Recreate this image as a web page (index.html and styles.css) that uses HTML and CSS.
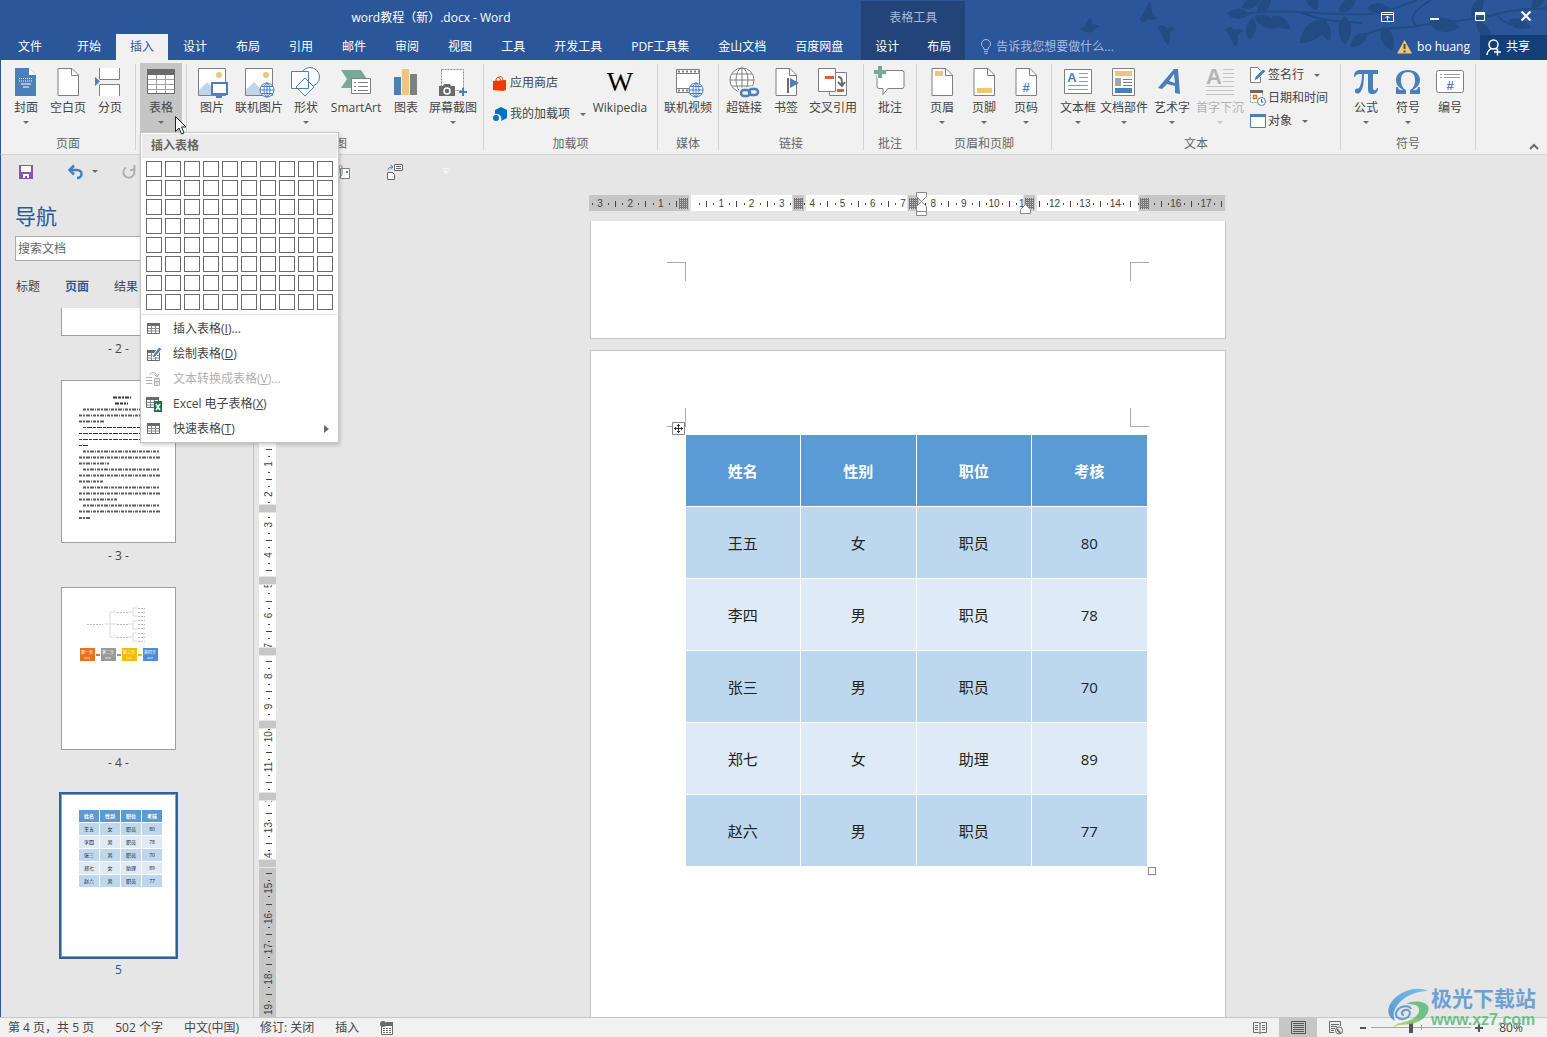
FILE: index.html
```html
<!DOCTYPE html>
<html lang="zh-CN">
<head>
<meta charset="utf-8">
<title>word教程（新）.docx - Word</title>
<link rel="stylesheet" href="styles.css">
</head>
<body>
<svg class="defs" width="0" height="0" aria-hidden="true">
  <defs>
    <g id="page"><path d="M6 2.500h14l6.500 6.500v20.500h-20.500z" fill="#fff" stroke="#7f7f7f"/><path d="M19.500 2.500v7h7" fill="none" stroke="#7f7f7f"/></g>
    <g id="globe" fill="none" stroke="#4a7fb8"><circle r="7" fill="#fff"/><ellipse rx="3" ry="7"/><path d="M-7 0h14M0-7v14M-6-3.500h12M-6 3.500h12"/></g>
    <g id="photo"><path d="M2.500 2.500h27v27h-27z" fill="#fff" stroke="#7f7f7f"/><circle cx="23" cy="9" r="3" fill="#edc67a"/><path d="M3 24l8-8 8 8v5H3z" fill="#c3d4e8"/></g>
    <g id="tiny-table"><path d="M.5 1.500h12v10h-12z" fill="#fff" stroke="#6a6a6a"/><path d="M0 1h13v3H0z" fill="#6a6a6a"/><path d="M1 6.500h11M1 9h11M4.500 4v7M8.500 4v7" stroke="#8a8a8a"/></g>
    <path id="leaf" d="M0 0C4-7 13-9 22-4C16 4 7 6 0 0z"/>
    <path id="bird" d="M0 9c3 0 5-1 6-4C7 2 9 0 12-1c-1 3 0 5 0 7 3-1 6 0 8 2-3 0-5 1-6 3-2 3-5 3-8 2C4 12 2 11 0 9z"/>
    <path id="bird-dive" d="M0 5c2-3 5-4 7-2l3 2c3-1 6-1 9 1-3 1-5 2-6 4 0 4 0 8-2 12-3-3-5-6-6-10C4 9 2 7 0 5z"/>
  </defs>
</svg>

<header class="titlebar">
  <svg class="foliage" width="470" height="60" viewBox="0 0 470 60" fill="#224a83" aria-hidden="true">
    <use href="#bird" transform="translate(3 19) scale(1)"/><use href="#bird-dive" transform="translate(62 24) scale(1 -1)"/><use href="#bird-dive" x="80" y="23"/><use href="#bird-dive" x="148" y="25"/>
    <g fill="none" stroke="#224a83" stroke-width="2"><path d="M160 16C190 8 225 13 260 14S300 16 340 0M225 13c20 8 34 8 60 10M282 40c18-16 40-10 58-14s50-4 80-12 30-3 50-6M340 26c-10-8-2-16 14-26M420 14c4 8 10 10 18 10"/></g>
    <use href="#leaf" transform="translate(172 14) rotate(190)"/><use href="#leaf" transform="translate(180 13) rotate(-40)"/><use href="#leaf" transform="translate(178 16) rotate(35) scale(1.2)"/><use href="#leaf" transform="translate(176 18) rotate(110)"/><use href="#leaf" transform="translate(195 16) rotate(45)"/><use href="#leaf" transform="translate(165 8) rotate(-20)"/>
    <use href="#leaf" transform="translate(250 20) rotate(150) scale(1.600)"/><use href="#leaf" transform="translate(245 20) rotate(80)"/><use href="#leaf" transform="translate(268 16) rotate(100) scale(1.300)"/><use href="#leaf" transform="translate(262 12) rotate(-30)"/><use href="#leaf" transform="translate(290 8) rotate(10)"/><use href="#leaf" transform="translate(290 33) rotate(150)"/><use href="#leaf" transform="translate(306 26) rotate(80) scale(1.200)"/><use href="#leaf" transform="translate(240 10) rotate(-110)"/>
    <use href="#leaf" transform="translate(352 22) rotate(20) scale(1.400)"/><use href="#leaf" transform="translate(395 16) rotate(-50)"/><use href="#leaf" transform="translate(400 22) rotate(60)"/><use href="#leaf" transform="translate(432 20) rotate(30)"/><use href="#leaf" transform="translate(455 8) rotate(-40)"/>
  </svg>
  <div class="titlebar__row">
    <h1 class="titlebar__name">word教程（新）.docx - Word</h1>
    <div class="window-controls">
      <button class="window-btn" aria-label="功能区显示选项"><svg width="14" height="14"><path d="M.5 2.500h12v9H.5zM.5 4.500h12" fill="none" stroke="#fff"/><path d="M6.500 10.500V6M4.500 8l2-2 2 2" fill="none" stroke="#fff"/></svg></button>
      <button class="window-btn" aria-label="最小化"><svg width="14" height="14"><path d="M3 8h9v2H3z" fill="#fff"/></svg></button>
      <button class="window-btn" aria-label="最大化"><svg width="14" height="14"><path d="M2.500 2.500h9v8h-9z" fill="none" stroke="#fff"/><path d="M2 2h10v3H2z" fill="#fff"/></svg></button>
      <button class="window-btn" aria-label="关闭"><svg width="14" height="14"><path d="M2.500 1.500l9 9M11.500 1.500l-9 9" stroke="#fff" stroke-width="2"/></svg></button>
    </div>
  </div>
  <nav class="tabs">
    <button class="tab tab--file">文件</button>
    <button class="tab">开始</button>
    <button class="tab tab--active">插入</button>
    <button class="tab">设计</button>
    <button class="tab">布局</button>
    <button class="tab">引用</button>
    <button class="tab">邮件</button>
    <button class="tab">审阅</button>
    <button class="tab">视图</button>
    <button class="tab">工具</button>
    <button class="tab">开发工具</button>
    <button class="tab">PDF工具集</button>
    <button class="tab">金山文档</button>
    <button class="tab">百度网盘</button>
    <div class="context-tabs">
      <span class="context-tabs__title">表格工具</span>
      <div class="context-tabs__row">
        <button class="tab">设计</button>
        <button class="tab">布局</button>
      </div>
    </div>
    <label class="tell-me"><svg width="12" height="16" fill="none" stroke="#a9bcdb"><path d="M4 10.500C4 8 1.500 7.500 1.500 5a4.500 4.500 0 0 1 9 0C10.500 7.500 8 8 8 10.500zM4 12.500h4M4.500 14.500h3"/></svg><input class="tell-me__input" aria-label="告诉我" placeholder="告诉我您想要做什么..."></label>
    <div class="account">
      <svg width="15" height="14"><path d="M7.500 0L15 13.500H0z" fill="#edc67a"/><path d="M6.500 4h2v5h-2zM6.500 10.500h2v2h-2z" fill="#5b4a2a"/></svg>
      <span class="account__name">bo huang</span>
      <button class="share"><svg width="16" height="16" fill="none" stroke="#fff" stroke-width="1.500"><circle cx="7.500" cy="5.500" r="4.500"/><path d="M1 16c0-3 2-5 4-6.500M9.500 9.500l1.500 1M8 13h7M11.500 9.500v7"/></svg>共享</button>
    </div>
  </nav>
</header>

<section class="ribbon">
  <div class="group">
    <div class="group__items">
      <button class="cmd"><svg width="32" height="32"><path d="M5 2h14l7 7v21H5z" fill="#4a7fb8"/><path d="M19 2l7 7h-7z" fill="#fff"/><path d="M9 12.500h14M9 15h14" stroke="#fff" stroke-dasharray="1 1"/><path d="M11 18h10M13 21h6" stroke="#fff"/></svg>封面<i class="arrow"></i></button>
      <button class="cmd"><svg width="32" height="32"><use href="#page"/></svg>空白页</button>
      <button class="cmd"><svg width="32" height="32"><path d="M5.500 2v11.500h20V2M5.500 30V18.500h20V30" fill="#fff" stroke="#7f7f7f"/><path d="M1 11l5 4.500L1 20z" fill="#4a7fb8"/></svg>分页</button>
    </div>
    <span class="group__label">页面</span>
  </div>

  <div class="group">
    <div class="group__items">
      <button class="cmd cmd--open" aria-expanded="true"><svg width="32" height="32"><path d="M2.500 3.500h27v24h-27z" fill="#fff" stroke="#6a6a6a"/><path d="M2 3h28v6H2z" fill="#6a6a6a"/><path d="M3 13.500h26M3 18.500h26M3 23.500h26M11.500 9v18M20.500 9v18" stroke="#a0a0a0"/></svg>表格<i class="arrow"></i></button>
    </div>
    <svg class="cursor" width="14" height="21"><path d="M1.500 1.500v15l3.500-3.500 2.500 6 2.500-1-2.500-6h4.500z" fill="#fff" stroke="#222"/></svg>
    <div class="menu">
      <div class="menu__title">插入表格</div>
      <div class="picker" id="picker"></div>
      <div class="menu__items">
        <button class="menu__item"><svg width="16" height="16"><use href="#tiny-table" x="1" y="1"/></svg><span>插入表格(<u>I</u>)...</span></button>
        <button class="menu__item"><svg width="16" height="16"><use href="#tiny-table" x="1" y="3"/><path d="M6 12l1-3 6-8 3 2-7 8z" fill="#4a7fb8" stroke="#fff"/></svg><span>绘制表格(<u>D</u>)</span></button>
        <button class="menu__item" disabled><svg width="16" height="16" fill="none" stroke="#b0b0b0"><path d="M0 6.500h6M0 9.500h6M0 12.500h6M8.500 7.500h5v7h-5zM8 10.500h6M11 8v6M4 4c0-3 6-4 7 1M8.500 3.500L11 6l2-3"/></svg><span>文本转换成表格(<u>V</u>)...</span></button>
        <button class="menu__item"><svg width="16" height="16"><use href="#tiny-table"/><path d="M8 5h8v11H8z" fill="#1f7246"/><path d="M10 8l4 6M14 8l-4 6" stroke="#fff" stroke-width="1.500"/></svg><span>Excel 电子表格(<u>X</u>)</span></button>
        <button class="menu__item"><svg width="16" height="16"><use href="#tiny-table" x="1" y="1"/></svg><span>快速表格(<u>T</u>)</span><i class="submenu-arrow"></i></button>
      </div>
    </div>
  </div>

  <div class="group">
    <div class="group__items">
      <button class="cmd"><svg width="32" height="32"><use href="#photo"/><path d="M16 17h15v11H16z" fill="#fff" stroke="#4a7fb8" stroke-width="2"/><path d="M20 31h6" stroke="#4a7fb8" stroke-width="2"/></svg>图片</button>
      <button class="cmd cmd--wide"><svg width="32" height="32"><use href="#photo"/><use href="#globe" x="24" y="24"/></svg>联机图片</button>
      <button class="cmd"><svg width="32" height="32" fill="#fff" stroke="#4a7fb8"><circle cx="20" cy="11" r="9.500"/><path d="M1.500 5.500h17v17h-17zM15 12l9 9-9 9-9-9z"/></svg>形状<i class="arrow"></i></button>
      <button class="cmd cmd--smart"><svg width="32" height="32"><path d="M1 4h20l6 9-6 9H1l6-9z" fill="#77a997"/><path d="M11.500 12.500h19v15h-19z" fill="#fff" stroke="#7f7f7f"/><path d="M14 16.500h2m2 0h10M14 20.500h2m2 0h10M14 24.500h2m2 0h10" stroke="#7f7f7f"/></svg>SmartArt</button>
      <button class="cmd"><svg width="32" height="32"><path d="M4 11h7v18H4z" fill="#4a7fb8"/><path d="M12 3h7v26h-7z" fill="#edc67a"/><path d="M20 8h7v21h-7z" fill="#808080"/></svg>图表</button>
      <button class="cmd cmd--wide"><svg width="32" height="32"><path d="M4.500 3.500h22v21h-22z" fill="#fff" stroke="#8a8a8a" stroke-dasharray="2 1"/><path d="M2 20h4l1-2h6l1 2h4v10H2z" fill="#6a6a6a"/><circle cx="10" cy="25" r="3" fill="none" stroke="#fff" stroke-width="1.500"/><path d="M22 26h8M26 22v8" stroke="#4a7fb8" stroke-width="2"/></svg>屏幕截图<i class="arrow"></i></button>
    </div>
    <span class="group__label">插图</span>
  </div>

  <div class="group">
    <div class="group__items">
      <div class="stack stack--addins">
        <button class="small-cmd"><svg width="16" height="16"><path d="M1 6l13-1v10l-3 1-10-1z" fill="#eb3c00"/><path d="M4 6c0-5 4-5 5 0M6 3c2-3 5-1 5 3" fill="none" stroke="#eb3c00"/></svg>应用商店</button>
        <button class="small-cmd"><svg width="16" height="16" fill="#0072c6"><path d="M9 1l6 3v8l-6 3c2-5-3-8-6-7V4z"/><circle cx="4" cy="12" r="3"/></svg>我的加载项<i class="arrow arrow--inline"></i></button>
      </div>
      <button class="cmd cmd--wiki"><svg width="32" height="32"><text x="16" y="25" text-anchor="middle" class="glyph glyph--wiki">W</text></svg>Wikipedia</button>
    </div>
    <span class="group__label">加载项</span>
  </div>

  <div class="group">
    <div class="group__items">
      <button class="cmd cmd--wide"><svg width="32" height="32"><path d="M4.500 3.500h23v23h-23z" fill="#fff" stroke="#7f7f7f"/><path d="M5 7.500h22M5 22.500h22" stroke="#7f7f7f"/><path d="M6 5.500h21M6 24.500h21" stroke="#7f7f7f" stroke-width="2" stroke-dasharray="2 2"/><use href="#globe" x="24" y="24"/></svg>联机视频</button>
    </div>
    <span class="group__label">媒体</span>
  </div>

  <div class="group">
    <div class="group__items">
      <button class="cmd"><svg width="32" height="32"><g fill="none" stroke="#7f7f7f"><circle cx="14" cy="14" r="12" fill="#fff"/><ellipse cx="14" cy="14" rx="6" ry="12"/><path d="M2 14h24M14 2v24M4 8h20M4 20h20"/></g><g fill="none" stroke="#f1f1f1" stroke-width="6"><rect x="13" y="24" width="9" height="6" rx="3"/><rect x="21" y="23" width="9" height="6" rx="3"/></g><g fill="none" stroke="#4a7fb8" stroke-width="2.500"><rect x="13" y="24" width="9" height="6" rx="3"/><rect x="21" y="23" width="9" height="6" rx="3"/></g></svg>超链接</button>
      <button class="cmd"><svg width="32" height="32"><use href="#page"/><path d="M17 12h2v15h-2z" fill="#6a6a6a"/><path d="M20 12l9 5-9 5z" fill="#4a7fb8"/></svg>书签</button>
      <button class="cmd cmd--wide"><svg width="32" height="32"><path d="M12.500 6.500h17v23h-17z" fill="#fff" stroke="#7f7f7f"/><path d="M1.500 2.500h17v23h-17z" fill="#fff" stroke="#7f7f7f"/><path d="M8 10h9v3H8zM20 23h7v3h-7z" fill="#d65f3e"/><path d="M21 11c4 0 4 3 4 8M21 16l4 4 3-4" fill="none" stroke="#6a6a6a" stroke-width="2"/></svg>交叉引用</button>
    </div>
    <span class="group__label">链接</span>
  </div>

  <div class="group">
    <div class="group__items">
      <button class="cmd cmd--note"><svg width="32" height="32"><path d="M4 4.500h24q2 0 2 2v14q0 2-2 2H14l-5 6v-6H5q-2 0-2-2v-14z" fill="#fff" stroke="#7f7f7f"/><path d="M0 6h12M6 0v12" stroke="#f1f1f1" stroke-width="6"/><path d="M0 6h12M6 0v12" stroke="#77a997" stroke-width="4"/></svg>批注</button>
    </div>
    <span class="group__label">批注</span>
  </div>

  <div class="group">
    <div class="group__items">
      <button class="cmd"><svg width="32" height="32"><use href="#page"/><path d="M9 5h8v5H9z" fill="#edc67a"/></svg>页眉<i class="arrow"></i></button>
      <button class="cmd"><svg width="32" height="32"><use href="#page"/><path d="M9 22h15v5H9z" fill="#edc67a"/></svg>页脚<i class="arrow"></i></button>
      <button class="cmd"><svg width="32" height="32"><use href="#page"/><text x="16" y="26" text-anchor="middle" class="glyph glyph--hash">#</text></svg>页码<i class="arrow"></i></button>
    </div>
    <span class="group__label">页眉和页脚</span>
  </div>

  <div class="group">
    <div class="group__items">
      <button class="cmd cmd--note"><svg width="32" height="32"><path d="M2.500 3.500h27v24h-27z" fill="#fff" stroke="#7f7f7f"/><text x="10" y="16" text-anchor="middle" class="glyph glyph--hash">A</text><path d="M17 7.500h9M17 11.500h9M17 15.500h9M6 19.500h20M6 23.500h20" stroke="#9a9a9a"/></svg>文本框<i class="arrow"></i></button>
      <button class="cmd cmd--medium"><svg width="32" height="32"><path d="M4.500 2.500h22v27h-22z" fill="#fff" stroke="#7f7f7f"/><path d="M7 5h17v5H7z" fill="#edc67a"/><path d="M7 12h6v8H7z" fill="#a5a5a5"/><path d="M7 22h17v5H7z" fill="#4a7fb8"/><path d="M15 13.500h9M15 16.500h9M15 19.500h9" stroke="#7f7f7f"/></svg>文档部件<i class="arrow"></i></button>
      <button class="cmd cmd--medium"><svg width="32" height="32"><path d="M22 3l2 25-5-1v-7l-8-2-5 5-4-1L18 3zM18 8l-5 7 6 2z" fill="#4a7fb8" fill-rule="evenodd"/></svg>艺术字<i class="arrow"></i></button>
      <button class="cmd cmd--medium" disabled><svg width="32" height="32"><text x="10" y="18" text-anchor="middle" class="glyph glyph--drop">A</text><path d="M19 3.500h11M19 7.500h11M19 11.500h11M19 15.500h11M2 20.500h28M2 24.500h28M2 28.500h28" stroke="#c3c3c3"/></svg>首字下沉<i class="arrow"></i></button>
      <div class="stack stack--text">
        <button class="small-cmd"><svg width="16" height="16"><path d="M.5.5h7l3 3v12H.5z" fill="#fff" stroke="#7f7f7f"/><path d="M4 14l1-4 8-8 3 2-8 8z" fill="#4a7fb8" stroke="#f1f1f1"/></svg>签名行<i class="arrow arrow--inline"></i></button>
        <button class="small-cmd"><svg width="16" height="16"><path d="M.5.5h12v12H.5z" fill="#fff" stroke="#9a9a9a" stroke-dasharray="2 1"/><path d="M0 0h13v3H0z" fill="#6a6a6a"/><path d="M3.500 5.500h3v3h-3z" fill="none" stroke="#e8711a" stroke-width="1.500"/><circle cx="11.500" cy="11.500" r="4" fill="#fff" stroke="#4a7fb8"/><path d="M11.500 9v3h2" fill="none" stroke="#555"/></svg>日期和时间</button>
        <button class="small-cmd"><svg width="16" height="16"><path d="M.5 1.500h15v13H.5z" fill="#fff" stroke="#4a7fb8"/><path d="M0 1h16v3H0z" fill="#4a7fb8"/></svg>对象<i class="arrow arrow--inline"></i></button>
      </div>
    </div>
    <span class="group__label">文本</span>
  </div>

  <div class="group">
    <div class="group__items">
      <button class="cmd"><svg width="32" height="32"><path d="M4 11c0-5 2-7 6-7h18v4h-5v14c0 3 3 3 4 0h1c0 5-3 6-6 6-3 0-4-2-4-5V8h-4c0 8-1 14-3 17-2 4-7 3-6-1 1-2 3-1 4-2 2-3 3-8 3-14-4 0-6 0-7 3z" fill="#4a7fb8"/></svg>公式<i class="arrow"></i></button>
      <button class="cmd"><svg width="32" height="32"><path d="M4 28v-7h2c0 2 1 3 3 3h2C6 21 4 18 4 14 4 8 9 4 16 4s12 4 12 10c0 4-2 7-7 10h2c2 0 3-1 3-3h2v7H18v-4c4-2 5-6 5-10 0-5-2-8-7-8s-7 3-7 8c0 4 1 8 5 10v4z" fill="#4a7fb8"/></svg>符号<i class="arrow"></i></button>
      <button class="cmd"><svg width="32" height="32"><rect x="2.500" y="4.500" width="27" height="22" rx="2" fill="#fff" stroke="#7f7f7f"/><path d="M6 8.500h2m2 0h16M6 11.500h2m2 0h16" stroke="#9a9a9a"/><text x="16" y="24" text-anchor="middle" class="glyph glyph--hash">#</text></svg>编号</button>
    </div>
    <span class="group__label">符号</span>
  </div>
  <button class="collapse" aria-label="折叠功能区"><svg width="10" height="7"><path d="M1 6l4-4 4 4" fill="none" stroke="#6a6a6a" stroke-width="2"/></svg></button>
</section>

<div class="quick-access">
  <button class="quick-btn" aria-label="保存"><svg width="14" height="14"><path d="M0 0h14v14H0z" fill="#8a55ad"/><path d="M2 1h10v6H2zM4 9h6v4H8v-2H6v2H4z" fill="#fff"/></svg></button>
  <button class="quick-btn quick-btn--undo" aria-label="撤消"><svg width="16" height="14"><path d="M2 5h7c6 0 6 8 0 8M6 .5L1.500 5 6 9.500" fill="none" stroke="#4a7fb8" stroke-width="2.500"/></svg><i class="arrow arrow--inline"></i></button>
  <button class="quick-btn quick-btn--redo" aria-label="重复" disabled><svg width="15" height="14"><path d="M4 2.500a5.500 5.500 0 1 0 7 1M8 5h4.500V0" fill="none" stroke="#b0b0b0" stroke-width="2"/></svg></button>
  <button class="quick-btn quick-btn--attach" aria-label="附件"><svg width="14" height="14" fill="none" stroke="#7f7f7f"><path d="M4.500 3.500h9v10h-9z" fill="#fff"/><path d="M1 3v6c0 4 5 4 5 0V2c0-2-3-2-3 0v6"/><path d="M10 6h2v2h-2z" fill="#4a7fb8" stroke="none"/></svg></button>
  <button class="quick-btn quick-btn--pages" aria-label="文档"><svg width="16" height="16" fill="#fff" stroke="#6a6a6a"><path d="M7.500.5h8v6h-8zM9 2.500h5M9 4.500h5M.5 8.500h5l2 2v5h-7z"/><path d="M1 6c0-2 2-3 4-3M3.500 1L6 3 3.500 5" fill="none" stroke="#4a7fb8"/></svg></button>
  <button class="quick-btn quick-btn--more" aria-label="自定义快速访问工具栏"><svg width="6" height="7"><path d="M0 .5h6M1 3h4L3 6z" fill="#f7f7f7" stroke="#f7f7f7"/></svg></button>
</div>

<main class="workspace">
  <aside class="nav-pane">
    <h2 class="nav-pane__title">导航</h2>
    <input class="nav-pane__search" type="search" aria-label="搜索文档" placeholder="搜索文档">
    <div class="nav-pane__tabs">
      <button class="nav-tab">标题</button>
      <button class="nav-tab nav-tab--active">页面</button>
      <button class="nav-tab">结果</button>
    </div>
    <div class="thumbs">
      <figure class="thumb"><div class="thumb__page thumb__page--cut"></div><figcaption class="thumb__label">- 2 -</figcaption></figure>
      <figure class="thumb">
        <div class="thumb__page"><svg width="113" height="161" fill="none" stroke="#333" stroke-width="2">
          <path stroke-dasharray="4 1 3 1 2 1" d="M51 16.500h18M53 22.500h13"/>
          <path stroke-dasharray="3 1 2 1 4 1 1 1" opacity=".8" d="M21 28.500h77M17 34.500h81M17 40.500h26M21 70.500h77M17 76.500h81M17 82.500h30M21 88.500h77M17 94.500h81M17 100.500h24M21 106.500h77M17 112.500h81M17 118.500h38M21 124.500h77M17 130.500h81M17 137h12"/>
          <path stroke-dasharray="3 1 5 1" stroke-width="1" d="M21 46.500h77M17 52.500h81M17 58.500h81M17 64.500h10"/>
        </svg></div>
        <figcaption class="thumb__label">- 3 -</figcaption>
      </figure>
      <figure class="thumb">
        <div class="thumb__page"><svg width="113" height="161">
          <path d="M43 36h5M55 24h-7v25h7M48 36h7M66 24h4M66 36h4M66 49h4M75 20h-4v8h4M75 33h-4v8h4M75 45h-4v8h4" fill="none" stroke="#d9d9e2"/>
          <path d="M25 36.500h16M55 24.500h11M55 36.500h11M55 49.500h11M76 20.500h7M76 24.500h7M76 28.500h7M76 32.500h7M76 36.500h7M76 40.500h7M76 45.500h7M76 49.500h7M76 53.500h7" stroke="#bbb" stroke-dasharray="2 1"/>
          <path d="M18 60h15v13H18z" fill="#ed7020"/><path d="M39 60h15v13H39z" fill="#999"/><path d="M60 60h15v13H60z" fill="#f5bd00"/><path d="M81 60h15v13H81z" fill="#4a8fd0"/>
          <path d="M34 67h4" stroke="#ed7020" stroke-width="2"/><path d="M55 67h4" stroke="#999" stroke-width="2"/><path d="M76 67h4" stroke="#f5bd00" stroke-width="2"/>
          <g class="thumb__text"><text x="19" y="66">第一步</text><text x="40" y="66">第二步</text><text x="61" y="66">第三步</text><text x="82" y="66">第四步</text></g>
          <path d="M22 70h6M43 70h6M64 70h6M85 70h6" stroke="#fff" opacity=".7"/>
        </svg></div>
        <figcaption class="thumb__label">- 4 -</figcaption>
      </figure>
      <figure class="thumb thumb--current">
        <div class="thumb__page">
          <table class="mini-table">
            <tr><th>姓名</th><th>性别</th><th>职位</th><th>考核</th></tr>
            <tr><td>王五</td><td>女</td><td>职员</td><td>80</td></tr>
            <tr><td>李四</td><td>男</td><td>职员</td><td>78</td></tr>
            <tr><td>张三</td><td>男</td><td>职员</td><td>70</td></tr>
            <tr><td>郑七</td><td>女</td><td>助理</td><td>89</td></tr>
            <tr><td>赵六</td><td>男</td><td>职员</td><td>77</td></tr>
          </table>
        </div>
        <figcaption class="thumb__label">5</figcaption>
      </figure>
    </div>
  </aside>
  <div class="v-ruler"><svg id="v-ruler" width="17" height="797"></svg></div>
  <div class="canvas">
    <svg class="h-ruler" id="h-ruler" width="638" height="30"></svg>
    <article class="sheet sheet--previous">
      <div class="crop-marks crop-marks--bottom"><i></i><i></i></div>
    </article>
    <article class="sheet sheet--current">
      <div class="crop-marks"><i></i><i></i></div>
      <div class="table-wrap">
        <svg class="move-handle" width="13" height="13"><path d="M.5.5h12v12H.5z" fill="#fff" stroke="#8a8a8a"/><path d="M2 6.500h9M6.500 2v9M5 3.500h3M5 9.500h3M3.500 5v3M9.500 5v3" stroke="#333"/></svg>
        <table class="data-table">
          <thead><tr><th>姓名</th><th>性别</th><th>职位</th><th>考核</th></tr></thead>
          <tbody>
            <tr><td>王五</td><td>女</td><td>职员</td><td>80</td></tr>
            <tr><td>李四</td><td>男</td><td>职员</td><td>78</td></tr>
            <tr><td>张三</td><td>男</td><td>职员</td><td>70</td></tr>
            <tr><td>郑七</td><td>女</td><td>助理</td><td>89</td></tr>
            <tr><td>赵六</td><td>男</td><td>职员</td><td>77</td></tr>
          </tbody>
        </table>
        <i class="resize-handle"></i>
      </div>
    </article>
  </div>
</main>

<footer class="status">
  <span>第 4 页，共 5 页</span>
  <span>502 个字</span>
  <span>中文(中国)</span>
  <span>修订: 关闭</span>
  <span>插入</span>
  <button class="status__macro" aria-label="宏录制"><svg width="14" height="14"><path d="M1.500 4.500h11v9h-11z" fill="#fff" stroke="#6a6a6a"/><path d="M6 1h7v4H6z" fill="#6a6a6a"/><circle cx="3" cy="3" r="3" fill="#6a6a6a"/><path d="M3 7.500h9M3 9.500h9M3 11.500h9" stroke="#6a6a6a" stroke-dasharray="2 1"/></svg></button>
  <div class="views">
    <button class="view" aria-label="阅读视图"><svg width="14" height="14" fill="none" stroke="#6a6a6a"><path d="M.5 1.500h5l1.500 1 1.500-1h5v10h-5l-1.500 1-1.500-1h-5zM7 2v11M2 4.500h3M2 6.500h3M2 8.500h3M9 4.500h3M9 6.500h3M9 8.500h3"/></svg></button>
    <button class="view view--active" aria-label="页面视图"><svg width="15" height="14" fill="none" stroke="#555"><path d="M.5.5h14v12H.5zM2 2.500h11M2 4.500h11M2 6.500h11M2 8.500h11M2 10.500h11"/></svg></button>
    <button class="view" aria-label="Web 版式视图"><svg width="14" height="14" fill="none" stroke="#6a6a6a"><path d="M5 11.500H.5V.5h11V5M2 3.500h8M2 5.500h6M2 7.500h4M2 9.500h3"/><circle cx="10" cy="9.500" r="3.500"/><path d="M8 8l3 4" stroke-width="2"/></svg></button>
    <button class="zoom-btn" aria-label="缩小"><svg width="8" height="10"><path d="M1 4h6v2H1z" fill="#555"/></svg></button>
    <input class="zoom-slider" type="range" min="0" max="100" value="40" aria-label="缩放">
    <button class="zoom-btn" aria-label="放大"><svg width="8" height="10"><path d="M0 4h8v2H0zM3 1h2v8H3z" fill="#555"/></svg></button>
    <button class="zoom-value">80%</button>
  </div>
</footer>

<div class="watermark">
  <svg width="44" height="42"><defs><linearGradient id="leaf-green" x1="1" y1="0" x2="0" y2="1"><stop offset=".4" stop-color="#5cb878"/><stop offset="1" stop-color="#d2d84a"/></linearGradient><linearGradient id="sky-blue" x1="1" y1="0" x2="0" y2="1"><stop offset="0" stop-color="#5cc0ea"/><stop offset="1" stop-color="#4a84c8"/></linearGradient></defs>
    <path d="M41 4C30-1 15 3 6 13C-1 21 0 30 8 34C5 28 7 21 13 15C20 8 30 4 41 4z" fill="url(#sky-blue)"/>
    <path d="M19 17C26 13 38 14 41 19C44 26 35 35 24 37C18 38 10 37 5 41C9 35 17 36 23 33C33 29 35 20 28 18C25 17 22 17 19 17z" fill="url(#leaf-green)"/>
    <path d="M24 22C22 17 11 19 9 26C8 32 16 34 21 30C25 26 22 22 18 23C14 24 14 28 17 28" fill="none" stroke="#4f8fd0" stroke-width="2"/></svg>
  <div class="watermark__text"><strong class="watermark__name">极光下载站</strong><span class="watermark__url">www.xz7.com</span></div>
</div>
<script src="script.js"></script>
</body>
</html>
```
FILE: styles.css
```css
* { box-sizing: border-box; }

html, body { height: 100%; }

body {
  margin: 0;
  display: flex;
  flex-direction: column;
  overflow: hidden;
  position: relative;
  background: #e6e6e6;
  color: #444;
  font: 12px/18px "Open Sans", "Noto Sans CJK SC", sans-serif;
}

button, input { font: inherit; color: inherit; }
button { border: 0; padding: 0; background: none; }
svg { display: block; flex: none; overflow: visible; }
.defs { position: absolute; }

.glyph { font-family: "Liberation Sans", sans-serif; font-weight: bold; fill: #4a7fb8; }
.glyph--wiki { font-family: "Liberation Serif", serif; font-weight: normal; font-size: 28px; fill: #000; }
.glyph--hash { font-size: 13px; }
.glyph--drop { font-size: 22px; fill: #b5b5b5; }

.arrow {
  display: block;
  width: 0;
  height: 0;
  margin-top: 4px;
  border: 3px solid transparent;
  border-top-color: #6a6a6a;
  border-bottom: 0;
}
.arrow--inline { margin: 0 0 0 8px; }

/* Title bar */
.titlebar {
  position: relative;
  flex: none;
  height: 60px;
  background: #2b579a;
  color: #fff;
}
.foliage { position: absolute; right: 0; top: 0; overflow: hidden; }
.titlebar__row {
  position: relative;
  display: flex;
  height: 34px;
  justify-content: space-between;
}
.titlebar__name {
  flex: 0 0 862px;
  margin: 0;
  font-size: 12px;
  font-weight: normal;
  line-height: 36px;
  text-align: center;
}
.window-controls { display: flex; align-items: center; gap: 32px; padding-right: 14px; }

.tabs { position: relative; display: flex; gap: 1px; height: 26px; }
.tab { padding: 0 14px; line-height: 22px; white-space: nowrap; }
.tab--file { width: 60px; margin-right: 2px; }
.tab--active { background: #f1f1f1; color: #2b579a; }
.context-tabs {
  display: flex;
  flex-direction: column;
  height: 59px;
  margin: -33px 0 0 3px;
  background: #224478;
}
.context-tabs__title { height: 33px; line-height: 34px; text-align: center; color: #a9bcdb; }
.context-tabs__row { display: flex; height: 26px; }
.tell-me { display: flex; align-items: center; gap: 4px; margin-left: 14px; color: #a9bcdb; }
.tell-me__input { width: 140px; border: 0; padding: 0; background: none; }
.tell-me__input::placeholder { color: #a9bcdb; }
.account { display: flex; align-items: center; margin-left: auto; }
.account__name { margin: 0 10px 0 5px; }
.share {
  display: flex;
  align-items: center;
  gap: 4px;
  width: 67px;
  height: 25px;
  padding-left: 6px;
  background: #123f78;
}

/* Ribbon */
.ribbon {
  position: relative;
  flex: none;
  display: flex;
  height: 95px;
  border-left: 1px solid #2b579a;
  border-bottom: 1px solid #d2d2d2;
  background: #f1f1f1;
}
.group {
  display: flex;
  flex-direction: column;
  justify-content: space-between;
  position: relative;
  padding: 3px 5px 1px 4px;
}
.group::after {
  content: "";
  position: absolute;
  right: 0;
  top: 4px;
  bottom: 4px;
  border-right: 1px solid #d2d2d2;
}
.group__items { display: flex; }
.group__label { text-align: center; color: #666; }
.cmd {
  display: flex;
  flex-direction: column;
  align-items: center;
  width: 42px;
  height: 70px;
  padding-top: 3px;
  white-space: nowrap;
}
.cmd > svg { margin-bottom: 1px; }
.cmd--note { width: 44px; }
.cmd--medium { width: 48px; }
.cmd--wide { width: 52px; }
.cmd--smart { width: 58px; }
.cmd--wiki { width: 66px; }
.cmd--open { background: #c5c5c5; }
.cmd:disabled { color: #b1b1b1; }
.cmd:disabled .arrow { border-top-color: #c5c5c5; }
.stack { display: flex; flex-direction: column; }
.stack--addins { width: 99px; padding: 11px 0 0 4px; gap: 13px; }
.stack--text { width: 92px; padding: 3px 0 0 6px; gap: 5px; }
.small-cmd { display: flex; align-items: center; gap: 2px; white-space: nowrap; }
.collapse { margin: auto 8px 4px auto; }

.cursor { position: absolute; left: 38px; top: 55px; z-index: 3; }

/* Insert-table menu */
.menu {
  position: absolute;
  left: 4px;
  top: 72px;
  z-index: 2;
  width: 199px;
  padding: 1px;
  border: 1px solid #c6c6c6;
  background: #fff;
  box-shadow: 1px 2px 4px rgba(0, 0, 0, .2);
}
.menu__title { height: 24px; padding-left: 9px; background: #ebebeb; color: #666; font-weight: bold; line-height: 24px; }
.picker { display: grid; grid-template-columns: repeat(10, 16px); gap: 3px; padding: 3px 4px 4px; }
.picker__cell { height: 16px; border: 1px solid #6a6a6a; background: #fff; }
.menu__items { border-top: 1px solid #e1e1e1; padding-bottom: 1px; }
.menu__item { display: flex; align-items: center; gap: 11px; width: 100%; height: 25px; padding: 2px 8px 0 4px; }
.menu__item:disabled { color: #b1b1b1; }
.submenu-arrow { margin-left: auto; border: 4px solid transparent; border-left: 5px solid #6a6a6a; border-right: 0; }

/* Quick access bar */
.quick-access {
  flex: none;
  display: flex;
  align-items: center;
  height: 33px;
  padding-left: 18px;
  border-left: 1px solid #2b579a;
}
.quick-btn { display: flex; align-items: center; }
.quick-btn--undo { margin-left: 35px; }
.quick-btn--redo { margin-left: 24px; }
.quick-btn--attach { margin-left: 199px; }
.quick-btn--pages { margin-left: 37px; }
.quick-btn--more { margin-left: 40px; }

/* Workspace */
.workspace { flex: 1; min-height: 0; display: flex; border-left: 1px solid #2b579a; }
.nav-pane {
  display: flex;
  flex-direction: column;
  width: 253px;
  padding: 14px 14px 0;
  border-right: 1px solid #c6c6c6;
}
.nav-pane__title { margin: 0 0 6px; color: #2b579a; font-size: 21px; font-weight: normal; line-height: 28px; }
.nav-pane__search { height: 25px; border: 1px solid #ababab; padding: 0 2px; background: #fff; appearance: none; }
.nav-pane__search::placeholder { color: #666; }
.nav-pane__tabs { display: flex; height: 47px; gap: 25px; padding: 5px 0 0 1px; }
.nav-tab--active { color: #2b579a; font-weight: bold; }
.thumbs { flex: 1; min-height: 0; overflow: hidden; padding-left: 46px; }
.thumb { width: 115px; height: 207px; margin: 0; }
.thumb:first-child { height: 72px; }
.thumb__page { height: 163px; border: 1px solid #9aa0aa; background: #fff; }
.thumb__page--cut { height: 28px; border-top: 0; }
.thumb__label { height: 26px; line-height: 26px; text-align: center; }
.thumb--current .thumb__page { outline: 2px solid #2b629f; }
.thumb--current .thumb__label { color: #2b579a; }
.thumb__text { font: 4px "Noto Sans CJK SC", sans-serif; fill: #fff; }
.mini-table { margin: 14px 0 0 16px; border-spacing: 1px; font-size: 5px; line-height: 12px; text-align: center; table-layout: fixed; width: 85px; }
.mini-table td, .mini-table th { height: 12px; padding: 0; background: #bdd7ee; color: #222; }
.mini-table th { background: #5b9bd5; color: #fff; }
.mini-table tr:nth-child(odd) td { background: #deeaf6; }

.v-ruler { width: 22px; padding: 32px 0 0 5px; overflow: hidden; }
.ruler-text { font: 10px "Liberation Sans", sans-serif; fill: #444; text-anchor: middle; }

.canvas {
  flex: 1;
  min-width: 0;
  display: flex;
  flex-direction: column;
  align-items: center;
  padding: 3px 8px 0 0;
  overflow: hidden;
}
.h-ruler { flex: none; }
.sheet { flex: none; width: 636px; border: 1px solid #c6c6c6; background: #fff; }
.sheet--previous { height: 118px; border-top: 0; padding-top: 41px; margin-bottom: 11px; }
.sheet--current { flex: 1; border-bottom: 0; padding-top: 57px; }
.crop-marks { display: flex; justify-content: space-between; width: 482px; height: 19px; margin-left: 76px; }
.crop-marks i { width: 19px; border: 0 solid #ababab; border-bottom-width: 1px; }
.crop-marks i:first-child { border-right-width: 1px; }
.crop-marks i:last-child { border-left-width: 1px; }
.crop-marks--bottom i { border-bottom-width: 0; border-top-width: 1px; }
.table-wrap { position: relative; width: 463px; margin: 8px 0 0 94px; }
.move-handle { position: absolute; left: -13px; top: -13px; }
.resize-handle { position: absolute; right: -8px; bottom: -8px; width: 8px; height: 8px; border: 1px solid #8a8a8a; background: #fff; }
.data-table { width: 100%; table-layout: fixed; border-spacing: 1px 0; color: #222; font-size: 15px; text-align: center; }
.data-table th, .data-table td { height: 72px; padding: 0; border-bottom: 1px solid #fff; background: #bdd7ee; background-clip: padding-box; }
.data-table th { background-color: #5b9bd5; color: #fff; }
.data-table tbody tr:nth-child(even) td { background-color: #deeaf6; }

/* Status bar */
.status {
  flex: none;
  display: flex;
  align-items: center;
  gap: 21px;
  height: 20px;
  padding-left: 8px;
  border-top: 1px solid #c6c6c6;
  background: #f1f1f1;
  white-space: nowrap;
}
.views { display: flex; align-items: center; margin-left: auto; padding-right: 23px; }
.view { display: flex; align-items: center; justify-content: center; width: 38px; height: 19px; }
.view--active { background: #c6c6c6; }
.zoom-btn { width: 8px; }
.view + .zoom-btn { margin-left: 4px; }
.zoom-slider {
  appearance: none;
  width: 100px;
  height: 12px;
  margin: 0 4px;
  background: linear-gradient(#a5a5a5, #a5a5a5) center / 100% 1px no-repeat, linear-gradient(#a5a5a5, #a5a5a5) center / 1px 5px no-repeat;
}
.zoom-slider::-webkit-slider-thumb { appearance: none; width: 4px; height: 11px; background: #555; }
.zoom-value { width: 26px; margin-left: 15px; }

.watermark { position: absolute; right: 11px; bottom: 6px; display: flex; opacity: .85; pointer-events: none; }
.watermark__text { display: flex; flex-direction: column; }
.watermark__name { font-size: 21px; line-height: 22px; color: #5a96d0; }
.watermark__url { font: bold 16px/22px "Liberation Sans", sans-serif; color: #5cb878; }
```
FILE: script.js
```js
const SVG = 'http://www.w3.org/2000/svg';

// Ten by eight cells of the table size picker.
const picker = document.getElementById('picker');
for (let i = 0; i < 80; i++) {
  const cell = document.createElement('button');
  cell.className = 'picker__cell';
  cell.setAttribute('aria-label', `${i % 10 + 1}x${Math.floor(i / 10) + 1}`);
  picker.append(cell);
}

function add(parent, name, attrs, text) {
  const el = document.createElementNS(SVG, name);
  for (const key in attrs) el.setAttribute(key, attrs[key]);
  if (text !== undefined) el.textContent = text;
  parent.append(el);
}

const CM = 30.3;

// Horizontal ruler: origin is the left page margin.
const h = document.getElementById('h-ruler');
const rect = (svg, x, y, width, height, fill) => add(svg, 'rect', { x, y, width, height, fill });
rect(h, 0, 4, 638, 16, '#e0e0e0');
rect(h, 0, 4, 99, 16, '#c6c6c6');
[[102, 101], [217, 101], [332, 102], [448, 101]].forEach(([x, w]) => rect(h, x, 4, w, 16, '#fff'));
rect(h, 551, 4, 85, 16, '#c6c6c6');
const hidden = [0, 15];
for (let n = -3; n <= 17; n++) {
  const x = 102 + CM * n;
  if (!hidden.includes(n)) add(h, 'text', { x, y: 16, class: 'ruler-text' }, Math.abs(n));
  [x - 8, x + 8].forEach(d => { if (d > 0) rect(h, Math.round(d), 12, 1, 2, '#444'); });
  rect(h, Math.round(x + 15), 10, 1, 6, '#444');
}
[90, 205, 320, 436, 551].forEach(x => {
  rect(h, x - 1, 4, 11, 16, '#c6c6c6');
  for (let i = 0; i < 9; i += 2) {
    rect(h, x + i, 7, 1, 11, '#777');
    rect(h, x, 8 + i, 9, 1, '#777');
  }
});
add(h, 'path', { d: 'M327.5 1.500h10v4l-5 5 5 5v9h-10v-9l5-5-5-5zM327.500 20.500h10', fill: '#fff', stroke: '#8a8a8a' });
add(h, 'path', { d: 'M431.500 22.500v-4l5-5 5 5v4z', fill: '#fff', stroke: '#8a8a8a' });

// Vertical ruler: row boundaries of the table split it into segments.
const v = document.getElementById('v-ruler');
rect(v, 0, 0, 17, 647, '#fff');
rect(v, 0, 647, 17, 150, '#c6c6c6');
for (let n = 1; n <= 19; n++) {
  const y = 244 + CM * (n - 1);
  add(v, 'text', { x: 0, y: 0, class: 'ruler-text', transform: `translate(13 ${y}) rotate(-90)` }, n);
  [y - 8, y + 8].forEach(d => rect(v, 9, Math.round(d), 2, 1, '#444'));
  rect(v, 7, Math.round(y - 15), 6, 1, '#444');
}
[285, 357, 428, 501, 573, 640].forEach(y => {
  rect(v, 0, y - 1, 17, 9, '#e6e6e6');
  rect(v, 0, y, 17, 7, '#c6c6c6');
});
```
